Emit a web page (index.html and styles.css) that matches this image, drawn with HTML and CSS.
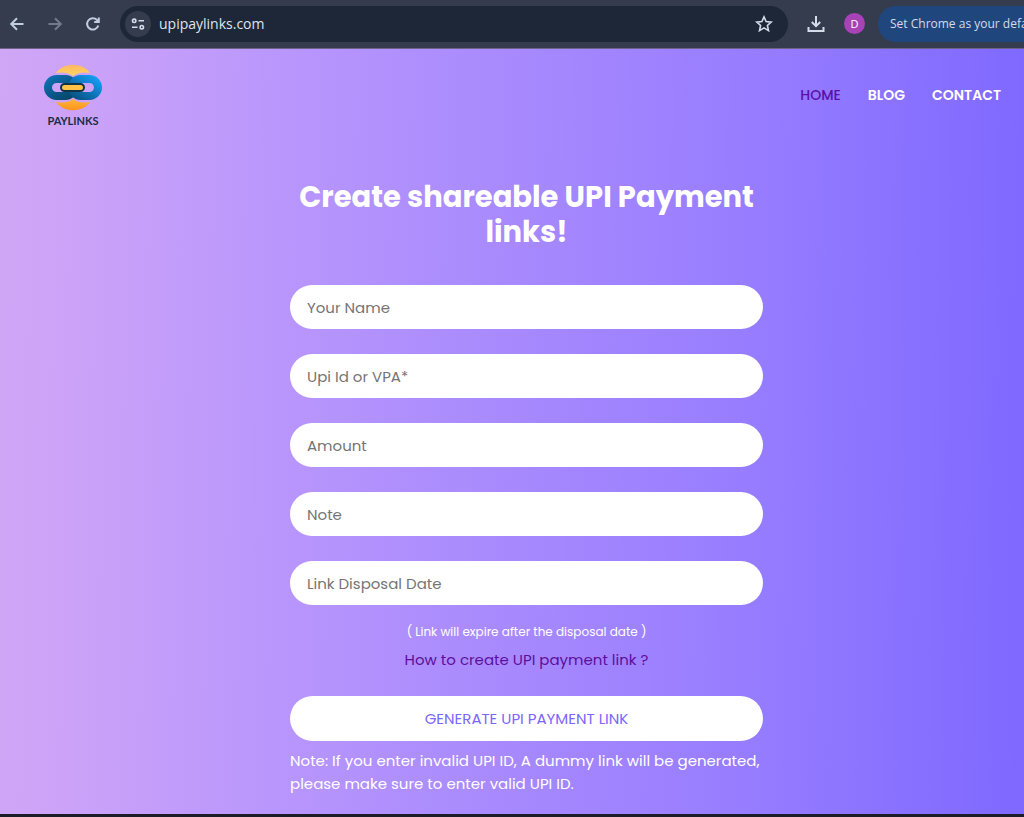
FILE: index.html
```html
<!DOCTYPE html>
<html lang="en">
<head>
<meta charset="utf-8">
<meta name="viewport" content="width=device-width, initial-scale=1">
<title>UPI Paylinks</title>
<link rel="stylesheet" href="styles.css">
</head>
<body>
<div class="toolbar">
  <button class="tool" type="button" aria-label="Back">
    <svg width="18" height="18" viewBox="0 0 18 18"><path d="M15.500 9H3.500M9 3.200L3.200 9L9 14.800"/></svg>
  </button>
  <button class="tool tool-off" type="button" aria-label="Forward">
    <svg width="18" height="18" viewBox="0 0 18 18"><path d="M2.500 9H14.500M9 3.200L14.800 9L9 14.800"/></svg>
  </button>
  <button class="tool" type="button" aria-label="Reload">
    <svg width="18" height="18" viewBox="0 0 18 18"><path d="M14.300 10.500A5.700 5.700 0 1 1 13 5L14.600 6.600M14.800 2.500V7H10.200"/></svg>
  </button>
  <div class="address">
    <button class="site-info" type="button" aria-label="Site information">
      <svg width="16" height="16" viewBox="0 0 16 16"><circle cx="4.200" cy="4.800" r="1.700"/><path d="M8.500 4.800H14M2 11.200H7.500"/><circle cx="11.800" cy="11.200" r="1.700"/></svg>
    </button>
    <input class="url" type="text" aria-label="Address" value="upipaylinks.com">
    <button class="star" type="button" aria-label="Bookmark">
      <svg width="18" height="18" viewBox="0 0 18 18"><path d="M9 1.900L11.100 6.600L16.200 7.100L12.400 10.500L13.500 15.600L9 12.900L4.500 15.600L5.600 10.500L1.800 7.100L6.900 6.600Z"/></svg>
    </button>
  </div>
  <button class="download" type="button" aria-label="Downloads">
    <svg width="20" height="20" viewBox="0 0 20 20"><path d="M10 2V12M5.800 8L10 12.200L14.200 8M2.500 13V17H17.500V13"/></svg>
  </button>
  <button class="profile" type="button" aria-label="Profile">D</button>
  <button class="default-browser" type="button">Set Chrome as your default browser</button>
</div>

<div class="page">
  <header class="header">
    <a class="logo" href="#" aria-label="Paylinks">
      <svg width="60" height="48" viewBox="0 0 60 48">
        <defs>
          <linearGradient id="sun-top" x1="0" y1="0" x2="0" y2="1"><stop offset="0" stop-color="#ffb765"/><stop offset="1" stop-color="#ffd75a"/></linearGradient>
          <linearGradient id="sun-base" x1="0" y1="0" x2="0" y2="1"><stop offset="0" stop-color="#ffb43a"/><stop offset="1" stop-color="#ff941c"/></linearGradient>
          <linearGradient id="ring-left" x1="0" y1="0" x2="1" y2="1"><stop offset="0" stop-color="#0d6fb0"/><stop offset="1" stop-color="#064568"/></linearGradient>
          <linearGradient id="ring-right" x1="0" y1="1" x2="1" y2="0"><stop offset="0" stop-color="#075383"/><stop offset="1" stop-color="#159cf5"/></linearGradient>
        </defs>
        <path fill="url(#sun-top)" d="M13 9C20-2 40-2 47 9Q36 7 30 12Q24 7 13 9Z"/>
        <path fill="url(#sun-base)" d="M13 38C20 49 40 49 47 38Q36 40 30 35Q24 40 13 38Z"/>
        <rect x="5" y="15" width="26" height="17" rx="8.500" fill="none" stroke="url(#ring-left)" stroke-width="8"/>
        <rect x="29" y="15" width="26" height="17" rx="8.500" fill="none" stroke="url(#ring-right)" stroke-width="8"/>
        <rect x="18" y="20" width="23" height="7" rx="3.500" fill="#ffc247" stroke="#103346" stroke-width="2"/>
      </svg>
      <span class="logo-name">PAYLINKS</span>
    </a>
    <nav class="nav">
      <a class="nav-link nav-current" href="#">HOME</a>
      <a class="nav-link" href="#">BLOG</a>
      <a class="nav-link" href="#">CONTACT</a>
    </nav>
  </header>
  <main class="main">
    <form class="form">
      <h1 class="title">Create shareable UPI Payment links!</h1>
      <div class="fields">
        <input class="field" type="text" placeholder="Your Name" aria-label="Your Name">
        <input class="field" type="text" placeholder="Upi Id or VPA*" aria-label="Upi Id or VPA">
        <input class="field" type="text" placeholder="Amount" aria-label="Amount">
        <input class="field" type="text" placeholder="Note" aria-label="Note">
        <input class="field" type="text" placeholder="Link Disposal Date" aria-label="Link Disposal Date">
      </div>
      <p class="hint">( Link will expire after the disposal date )</p>
      <a class="help" href="#">How to create UPI payment link ?</a>
      <button class="submit" type="button">GENERATE UPI PAYMENT LINK</button>
      <p class="note">Note: If you enter invalid UPI ID, A dummy link will be generated, please make sure to enter valid UPI ID.</p>
    </form>
  </main>
</div>
</body>
</html>
```

FILE: styles.css
```css
* { box-sizing: border-box; }
body {
  margin: 0;
  min-height: 100vh;
  display: flex;
  flex-direction: column;
  overflow-x: hidden;
  background: #1b1c28;
  font-family: Poppins, Inter, sans-serif;
}
button { border: 0; padding: 0; background: none; font: inherit; color: inherit; cursor: pointer; }
svg { display: block; }

.toolbar {
  display: flex;
  align-items: center;
  height: 49px;
  padding-left: 8px;
  padding-bottom: 1px;
  overflow: hidden;
  background: #343c4d;
  border-bottom: 1px solid #6d6386;
  font-family: "Segoe UI", "Open Sans", sans-serif;
  color: #d5dcea;
}
.toolbar svg { fill: none; stroke: currentColor; stroke-width: 2; }
.tool { flex: none; margin-right: 20px; color: #c3cde0; }
.tool-off { color: #737b8b; }
.address {
  flex: 1 1 0;
  display: flex;
  align-items: center;
  height: 36px;
  min-width: 0;
  margin-left: -2px;
  padding: 0 15px 0 5px;
  border-radius: 18px;
  background: #1e2737;
}
.site-info {
  flex: none;
  display: grid;
  place-items: center;
  width: 26px;
  height: 26px;
  border-radius: 50%;
  background: #343c4d;
}
.url {
  flex: 1;
  min-width: 0;
  padding: 0 8px;
  border: 0;
  outline: 0;
  background: none;
  font: 14px "Segoe UI", "Open Sans", sans-serif;
  color: #dfe4ee;
}
.star { flex: none; }
.toolbar .site-info svg, .toolbar .star svg { stroke-width: 1.6; }
.download { flex: none; margin-left: 18px; }
.profile {
  flex: none;
  width: 21px;
  height: 21px;
  margin: 0 13px 0 18px;
  border-radius: 50%;
  background: #a842b8;
  font-size: 11px;
  color: #fff;
}
.default-browser {
  flex: none;
  width: 146px;
  height: 36px;
  padding-left: 12px;
  border-radius: 18px 0 0 18px;
  background: #20467e;
  font-size: 12px;
  text-align: left;
  white-space: nowrap;
  overflow: hidden;
}

.page {
  flex: 1;
  margin-bottom: 3px;
  background: linear-gradient(91deg, #d0a6f6 0%, #c9a1f8 10%, #b896fc 28%, #957bff 75%, #7e68ff 100%);
}
.header {
  display: flex;
  justify-content: space-between;
  align-items: center;
  height: 92px;
  padding: 0 23px 0 43px;
}
.logo { display: flex; flex-direction: column; align-items: center; text-decoration: none; }
.logo-name { margin-top: 3px; font-family: Lato, sans-serif; font-size: 11px; line-height: 12px; font-weight: 700; color: #172c44; }
.nav { display: flex; gap: 27px; }
.nav-link { font-size: 14px; font-weight: 600; line-height: 20px; color: #fff; text-decoration: none; }
.nav-current { font-weight: 500; color: #5c0ea8; }

.main { display: flex; justify-content: center; padding: 39px 0 18px 29px; }
.form { width: 473px; max-width: 90%; display: flex; flex-direction: column; align-items: center; }
.title { margin: 0; padding: 0 4px; color: #fff; font-size: 29px; line-height: 35px; font-weight: 700; text-align: center; }
.fields { display: flex; flex-direction: column; gap: 25px; width: 100%; margin-top: 35px; }
.field {
  width: 100%;
  height: 44px;
  padding: 0 17px;
  border: 0;
  border-radius: 22px;
  background: #fff;
  font: 15px Poppins, Inter, sans-serif;
}
.field::placeholder { color: #757575; opacity: 1; }
.hint { margin: 17px 0 0; font-size: 12px; line-height: 20px; color: #fff; }
.help { margin-top: 7px; font-size: 15px; line-height: 22px; color: #5c0e9e; text-decoration: none; }
.submit {
  width: 100%;
  height: 45px;
  margin-top: 25px;
  border-radius: 23px;
  background: #fff;
  font-size: 15px;
  color: #7b66ff;
}
.note { width: 100%; margin: 8px 0 0; font-size: 15px; line-height: 23px; color: #fff; }
```
